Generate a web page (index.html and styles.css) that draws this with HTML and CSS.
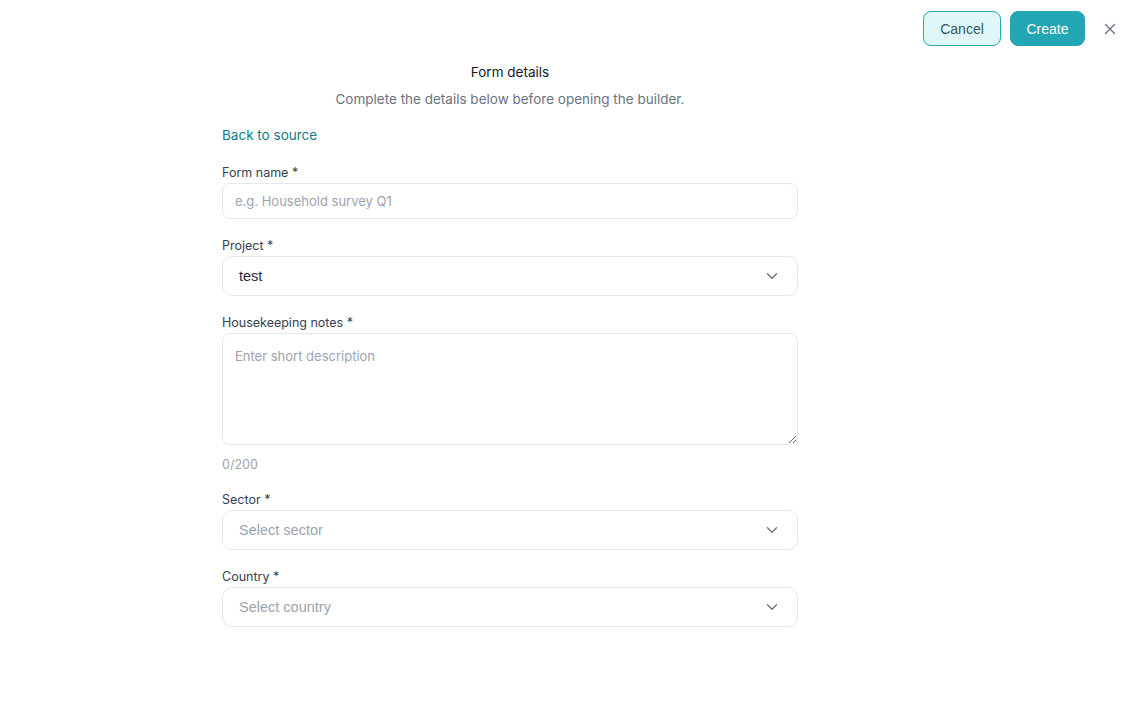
FILE: index.html
```html
<!DOCTYPE html>
<html lang="en">
<head>
<meta charset="utf-8">
<title>Form details</title>
<link rel="stylesheet" href="styles.css">
</head>
<body>
<header class="topbar">
  <button class="btn btn-cancel" type="button">Cancel</button>
  <button class="btn btn-create" type="button">Create</button>
  <button class="btn-close" type="button" aria-label="Close">
    <svg width="12" height="12" viewBox="0 0 12 12"><path d="M1.5 1.5L10.5 10.5M10.5 1.5L1.5 10.5" stroke="#6b7280" stroke-width="1.4" stroke-linecap="round"/></svg>
  </button>
</header>
<main class="form-wrap">
  <h1 class="title">Form details</h1>
  <p class="subtitle">Complete the details below before opening the builder.</p>
  <a class="back" href="#">Back to source</a>

  <div class="field field-first">
    <label class="label">Form name *</label>
    <input class="input" type="text" placeholder="e.g. Household survey Q1">
  </div>

  <div class="field">
    <label class="label">Project *</label>
    <div class="select">
      <span class="select-value">test</span>
      <svg class="chev" width="12" height="8" viewBox="0 0 12 8"><path d="M1.5 1.8L6 6.2L10.5 1.8" fill="none" stroke="#6b7280" stroke-width="1.4" stroke-linecap="round" stroke-linejoin="round"/></svg>
    </div>
  </div>

  <div class="field">
    <label class="label">Housekeeping notes *</label>
    <textarea class="textarea" placeholder="Enter short description"></textarea>
    <div class="counter">0/200</div>
  </div>

  <div class="field">
    <label class="label">Sector *</label>
    <div class="select">
      <span class="select-value placeholder">Select sector</span>
      <svg class="chev" width="12" height="8" viewBox="0 0 12 8"><path d="M1.5 1.8L6 6.2L10.5 1.8" fill="none" stroke="#6b7280" stroke-width="1.4" stroke-linecap="round" stroke-linejoin="round"/></svg>
    </div>
  </div>

  <div class="field">
    <label class="label">Country *</label>
    <div class="select">
      <span class="select-value placeholder">Select country</span>
      <svg class="chev" width="12" height="8" viewBox="0 0 12 8"><path d="M1.5 1.8L6 6.2L10.5 1.8" fill="none" stroke="#6b7280" stroke-width="1.4" stroke-linecap="round" stroke-linejoin="round"/></svg>
    </div>
  </div>
</main>
</body>
</html>
```
FILE: styles.css
```css
* { box-sizing: border-box; }
html, body { margin: 0; padding: 0; background: #ffffff; }
body {
  font-family: Inter, "Noto Sans", sans-serif;
  color: #1f2937;
  width: 1138px;
  height: 718px;
  overflow: hidden;
}
.topbar {
  display: flex;
  justify-content: flex-end;
  align-items: center;
  gap: 9px;
  padding: 11px 12px 0 0;
  height: 46px;
}
.btn {
  font-family: "Liberation Sans", Arial, sans-serif;
  font-size: 14px;
  height: 35px;
  border-radius: 8px;
  cursor: pointer;
  padding: 0;
}
.btn-cancel {
  width: 78px;
  background: #e0f7fa;
  border: 1px solid #2aa7b0;
  color: #2f5a63;
}
.btn-create {
  width: 75px;
  background: #22a6b3;
  border: 1px solid #22a6b3;
  color: #ffffff;
}
.btn-close {
  width: 32px;
  height: 35px;
  background: none;
  border: none;
  display: flex;
  align-items: center;
  justify-content: center;
  padding: 0;
}
.form-wrap {
  width: 576px;
  margin-left: 222px;
  display: flex;
  flex-direction: column;
}
.title {
  margin: 17px 0 0;
  font-size: 13.5px;
  font-weight: 400;
  line-height: 18px;
  text-align: center;
  color: #111827;
}
.subtitle {
  margin: 9px 0 0;
  font-size: 13.5px;
  line-height: 18px;
  text-align: center;
  color: #6b7280;
}
.back {
  margin-top: 18px;
  font-size: 13.5px;
  line-height: 18px;
  color: #0e7c86;
  text-decoration: none;
  align-self: flex-start;
}
.field {
  display: flex;
  flex-direction: column;
  margin-top: 19px;
}
.field-first { margin-top: 21px; }
.label {
  font-size: 12.5px;
  line-height: 16px;
  color: #374151;
  margin-bottom: 2px;
}
.input {
  height: 36px;
  border: 1px solid #e5e7eb;
  border-radius: 8px;
  padding: 0 12px;
  font-family: Inter, "Noto Sans", sans-serif;
  font-size: 13px;
  color: #1f2937;
  outline: none;
}
.input::placeholder, .textarea::placeholder { color: #9ca3af; }
.select {
  height: 40px;
  border: 1px solid #e5e7eb;
  border-radius: 10px;
  display: flex;
  align-items: center;
  justify-content: space-between;
  padding: 0 19px 0 16px;
}
.select-value {
  font-family: "Liberation Sans", Arial, sans-serif;
  font-size: 14.5px;
  color: #1f2937;
}
.select-value.placeholder { color: #9ca3af; }
.chev { display: block; }
.textarea {
  height: 112px;
  border: 1px solid #e5e7eb;
  border-radius: 8px;
  padding: 14px 12px;
  font-family: Inter, "Noto Sans", sans-serif;
  font-size: 13px;
  line-height: 16px;
  resize: vertical;
  outline: none;
}
.counter {
  margin-top: 12px;
  margin-bottom: 0;
  font-size: 12.5px;
  line-height: 16px;
  color: #9ca3af;
}
```
